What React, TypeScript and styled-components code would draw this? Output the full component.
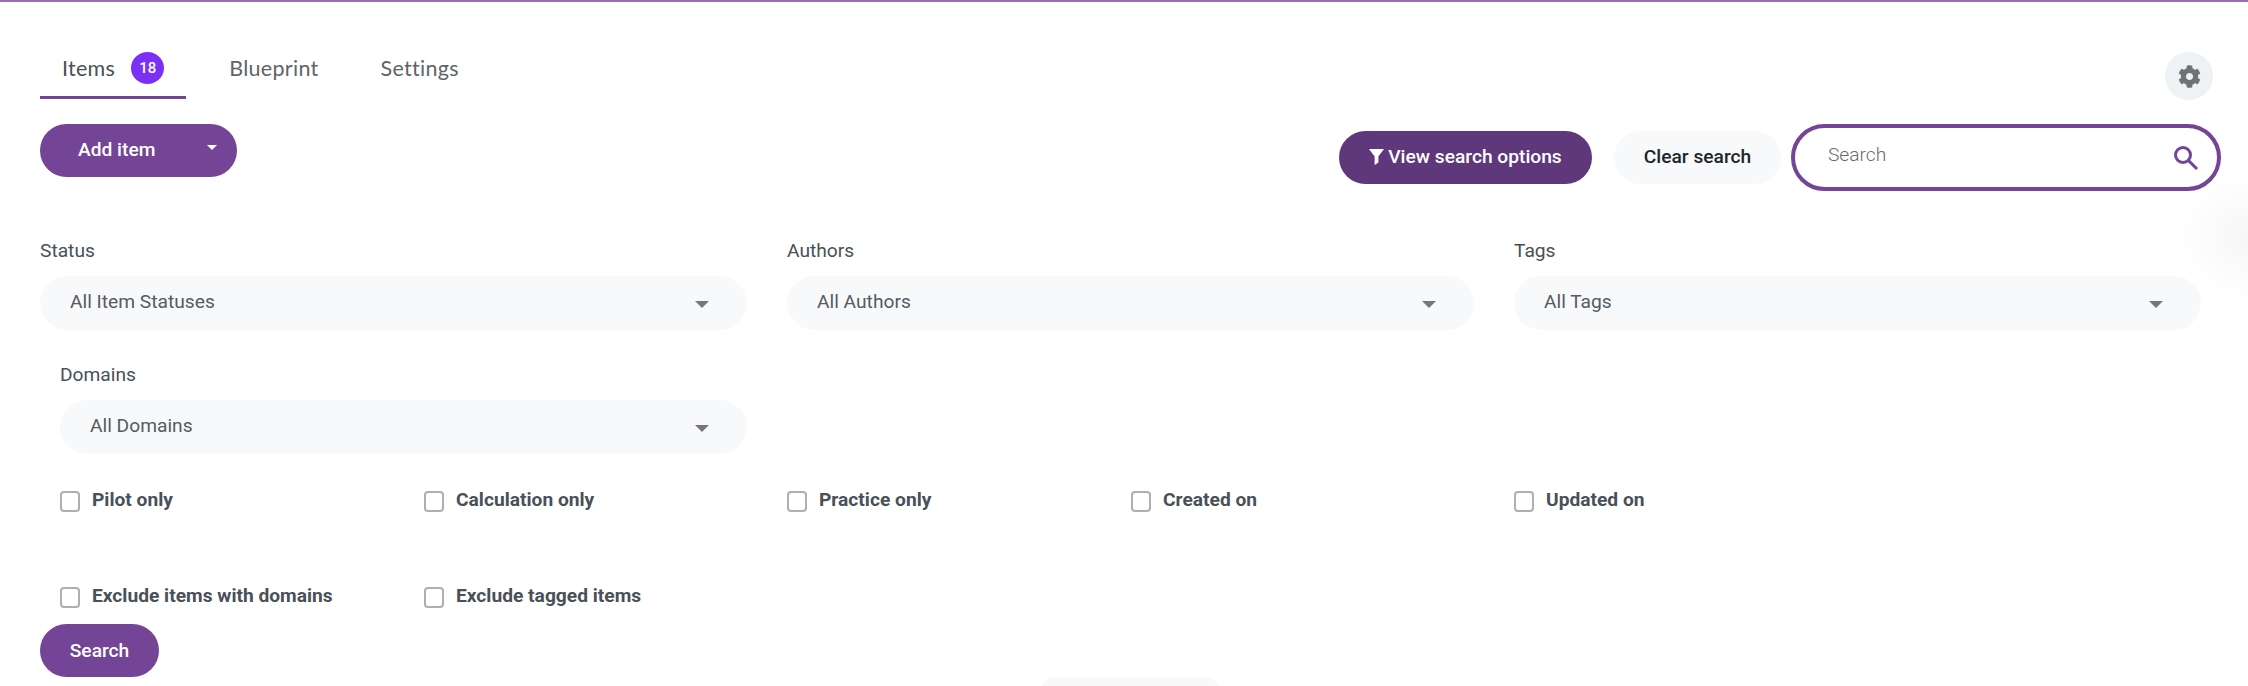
import React from "react";
import styled, { createGlobalStyle } from "styled-components";
import { FaCog } from "react-icons/fa";

const Global = createGlobalStyle`
  html, body { margin: 0; padding: 0; background: #fff; height: 686px; overflow: hidden; }
  * { box-sizing: border-box; }
  body { font-family: Roboto, "Liberation Sans", sans-serif; color: #495057; }
`;

const Page = styled.main`
  position: relative;
  width: 2248px;
  height: 686px;
  overflow: hidden;
  border-top: 2px solid #9a6bb8;
  padding: 0 27px 0 40px;
`;

const EdgeGlow = styled.div`
  position: absolute;
  right: -70px;
  top: 170px;
  width: 140px;
  height: 130px;
  border-radius: 50%;
  background: radial-gradient(closest-side, rgba(0, 0, 0, 0.035), rgba(0, 0, 0, 0));
  pointer-events: none;
`;

const TopRow = styled.div`
  display: flex;
  justify-content: space-between;
  align-items: flex-start;
  height: 97px;
  padding: 0 8px 0 0;
`;

const Tabs = styled.nav`
  display: flex;
  margin-top: 50px;
`;

const Tab = styled.a<{ $active?: boolean }>`
  display: flex;
  align-items: center;
  height: 47px;
  padding: 0 22px 13px;
  margin-right: ${(p) => (p.$active ? "21px" : "18px")};
  font-family: Lato, "Open Sans", sans-serif;
  font-size: 21.5px;
  letter-spacing: 0.3px;
  color: ${(p) => (p.$active ? "#495057" : "#5f6468")};
  border-bottom: 3px solid ${(p) => (p.$active ? "#744496" : "transparent")};
`;

const Badge = styled.span`
  display: inline-flex;
  align-items: center;
  justify-content: center;
  width: 33px;
  height: 32px;
  margin-left: 16px;
  border-radius: 50%;
  background: #7b2ff7;
  color: #fff;
  font-family: Roboto, sans-serif;
  font-size: 15px;
  font-weight: 500;
  letter-spacing: 0;
`;

const GearButton = styled.button`
  display: flex;
  align-items: center;
  justify-content: center;
  width: 48px;
  height: 48px;
  margin-top: 50px;
  padding: 0;
  border: 0;
  border-radius: 50%;
  background: #eff2f5;
  color: #6c7478;
`;

const ActionRow = styled.div`
  display: flex;
  justify-content: space-between;
  align-items: flex-start;
  margin-top: 25px;
  height: 67px;
`;

const Pill = styled.button`
  height: 53px;
  border: 0;
  border-radius: 27px;
  font-family: Roboto, sans-serif;
  font-size: 19.2px;
  font-weight: 500;
  background: #744496;
  color: #fff;
`;

const AddItem = styled(Pill)`
  display: flex;
  align-items: center;
  width: 197px;
  padding: 0 0 2px 38px;
`;

const AddCaret = styled.span`
  width: 0;
  height: 0;
  margin-left: 52px;
  border-left: 5px solid transparent;
  border-right: 5px solid transparent;
  border-top: 5px solid #fff;
  transform: translateY(-2px);
`;

const SearchTools = styled.div`
  display: flex;
  align-items: center;
`;

const ViewOptions = styled(Pill)`
  display: flex;
  align-items: center;
  justify-content: center;
  gap: 4px;
  width: 253px;
  padding: 0 0 2px;
  background: #5f387c;
`;

const ClearSearch = styled(Pill)`
  width: 167px;
  margin-left: 22px;
  padding: 0 0 2px;
  background: #f8f9fa;
  color: #212529;
`;

const SearchField = styled.label`
  display: flex;
  align-items: center;
  width: 430px;
  height: 67px;
  margin-left: 10px;
  padding: 0 18px 0 33px;
  border: 4px solid #744496;
  border-radius: 34px;
  background: #fff;
`;

const SearchInput = styled.input`
  flex: 1;
  min-width: 0;
  height: 30px;
  margin-top: -6px;
  padding: 0;
  border: 0;
  outline: 0;
  background: transparent;
  font-family: Roboto, sans-serif;
  font-size: 19.2px;
  font-weight: 300;
  color: #495057;
  &::placeholder { color: #666b70; opacity: 1; }
`;

const SelectRow = styled.div<{ $indent?: boolean }>`
  display: flex;
  gap: 40px;
  margin-top: ${(p) => (p.$indent ? "33px" : "48px")};
  padding-left: ${(p) => (p.$indent ? "20px" : "0")};
`;

const Field = styled.div<{ $width: number }>`
  width: ${(p) => p.$width}px;
`;

const FieldLabel = styled.div`
  height: 23px;
  margin-bottom: 14px;
  font-size: 19.2px;
  line-height: 23px;
  color: #495057;
`;

const Select = styled.div`
  display: flex;
  align-items: center;
  justify-content: space-between;
  height: 54px;
  padding: 0 38px 4px 30px;
  border-radius: 27px;
  background: #f8f9fa;
  font-size: 19.2px;
  color: #555b61;
`;

const SelectCaret = styled.span`
  width: 0;
  height: 0;
  border-left: 7px solid transparent;
  border-right: 7px solid transparent;
  border-top: 7px solid #777;
  transform: translateY(3px);
`;

const CheckGrid = styled.div`
  display: grid;
  grid-template-columns: 364px 363px 344px 383px 1fr;
  grid-auto-rows: 96px;
  margin-top: 34px;
  padding-left: 20px;
`;

const CheckLabel = styled.label`
  display: flex;
  align-items: flex-start;
  gap: 12px;
  font-size: 19.2px;
  font-weight: 700;
  line-height: 23px;
  color: #495057;
`;

const Box = styled.input`
  appearance: none;
  flex: none;
  width: 20px;
  height: 21px;
  margin: 3px 0 0;
  border: 2px solid #adb0b3;
  border-radius: 4px;
  background: #fff;
`;

const SearchButton = styled(Pill)`
  display: block;
  width: 119px;
  margin-top: -56px;
`;

const FooterPill = styled.div`
  width: 180px;
  height: 30px;
  margin: 0 0 0 1000px;
  border-radius: 15px 15px 0 0;
  background: #f8f9fa;
`;

const Funnel = () => (
  <svg width="15" height="17" viewBox="0 0 15 17" fill="#fff" aria-hidden="true">
    <path d="M0 1h15L9.4 8.4V14.5L5.6 17V8.4z" />
  </svg>
);

const Magnifier = () => (
  <svg width="26" height="26" viewBox="0 0 26 26" fill="none" stroke="#744496" strokeWidth="3" aria-hidden="true">
    <circle cx="10" cy="10" r="7.5" />
    <path d="M15.6 15.6 24 24" />
  </svg>
);

const checks = [
  "Pilot only",
  "Calculation only",
  "Practice only",
  "Created on",
  "Updated on",
  "Exclude items with domains",
  "Exclude tagged items",
];

export default function App() {
  return (
    <Page>
      <Global />
      <EdgeGlow />
      <TopRow>
        <Tabs>
          <Tab $active>
            Items<Badge>18</Badge>
          </Tab>
          <Tab>Blueprint</Tab>
          <Tab>Settings</Tab>
        </Tabs>
        <GearButton aria-label="Settings">
          <FaCog size={23} />
        </GearButton>
      </TopRow>

      <ActionRow>
        <AddItem>
          Add item
          <AddCaret />
        </AddItem>
        <SearchTools>
          <ViewOptions>
            <Funnel />
            View search options
          </ViewOptions>
          <ClearSearch>Clear search</ClearSearch>
          <SearchField>
            <SearchInput placeholder="Search" />
            <Magnifier />
          </SearchField>
        </SearchTools>
      </ActionRow>

      <SelectRow>
        <Field $width={707}>
          <FieldLabel>Status</FieldLabel>
          <Select>
            All Item Statuses
            <SelectCaret />
          </Select>
        </Field>
        <Field $width={687}>
          <FieldLabel>Authors</FieldLabel>
          <Select>
            All Authors
            <SelectCaret />
          </Select>
        </Field>
        <Field $width={687}>
          <FieldLabel>Tags</FieldLabel>
          <Select>
            All Tags
            <SelectCaret />
          </Select>
        </Field>
      </SelectRow>

      <SelectRow $indent>
        <Field $width={687}>
          <FieldLabel>Domains</FieldLabel>
          <Select>
            All Domains
            <SelectCaret />
          </Select>
        </Field>
      </SelectRow>

      <CheckGrid>
        {checks.map((c) => (
          <CheckLabel key={c}>
            <Box type="checkbox" />
            {c}
          </CheckLabel>
        ))}
      </CheckGrid>

      <SearchButton>Search</SearchButton>
      <FooterPill />
    </Page>
  );
}
